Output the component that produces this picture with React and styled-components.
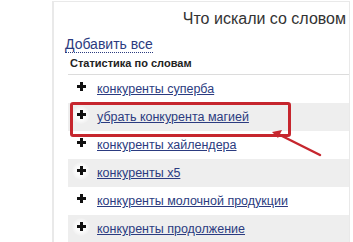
import React from "react";
import styled, { createGlobalStyle } from "styled-components";

const Global = createGlobalStyle`
  html, body { margin: 0; padding: 0; background: #fff; }
  body { font-family: "Liberation Sans", Arial, sans-serif; }
`;

const Page = styled.div`
  position: relative;
  width: 353px;
  height: 242px;
  overflow: hidden;
  padding: 1px 0 0 52px;
  box-sizing: border-box;
`;

const Panel = styled.div`
  width: 298px;
  height: 260px;
  border-left: 2px solid #e9e9e9;
  border-top: 1px solid #e9e9e9;
  border-right: 1px solid #e9e9e9;
  box-sizing: border-box;
  display: flex;
  flex-direction: column;
`;

const Title = styled.div`
  margin-top: 7px;
  padding-right: 3px;
  text-align: right;
  font-size: 16px;
  line-height: 19px;
  color: #333;
`;

const AddAll = styled.a`
  align-self: flex-start;
  margin: 9px 0 0 11px;
  font-size: 14px;
  line-height: 15px;
  color: #2b3b80;
  text-decoration: none;
  border-bottom: 1px dotted #2b3b80;
`;

const StatsHeader = styled.div`
  margin: 4px 0 0 16px;
  font-size: 11px;
  font-weight: bold;
  color: #222;
  line-height: 13px;
`;

const List = styled.div`
  margin: 4px 0 0 14px;
  border-top: 1px solid #dcdcdc;
  display: flex;
  flex-direction: column;
`;

const Row = styled.div`
  height: 28px;
  flex-shrink: 0;
  display: flex;
  align-items: center;
  padding-left: 4px;
  background: ${(p) => (p.$alt ? "#eeeeee" : "#ffffff")};
`;

const PlusWrap = styled.span`
  width: 18px;
  height: 18px;
  margin-top: -5px;
  display: flex;
  align-items: center;
  justify-content: center;
  border-radius: 50%;
  background: ${(p) => (p.$alt ? "radial-gradient(circle, #fbfbfb 40%, #eeeeee 75%)" : "transparent")};
`;

const WordLink = styled.a`
  margin-left: 7px;
  font-size: 12.5px;
  color: #2b3b80;
  text-decoration: underline;
  text-underline-offset: 1px;
`;

const Highlight = styled.div`
  position: absolute;
  left: 70px;
  top: 102px;
  width: 221px;
  height: 35px;
  border: 3px solid #c6262e;
  border-radius: 3px;
  box-sizing: border-box;
`;

const Arrow = styled.svg`
  position: absolute;
  left: 260px;
  top: 120px;
`;

const Plus = () => (
  <svg width="9" height="9" viewBox="0 0 9 9">
    <rect x="0" y="3" width="9" height="3" fill="#111" />
    <rect x="3" y="0" width="3" height="9" fill="#111" />
  </svg>
);

const words = [
  "конкуренты суперба",
  "убрать конкурента магией",
  "конкуренты хайлендера",
  "конкуренты х5",
  "конкуренты молочной продукции",
  "конкуренты продолжение",
];

export default function App() {
  return (
    <>
      <Global />
      <Page>
        <Panel>
          <Title>Что искали со словом</Title>
          <AddAll href="#">Добавить все</AddAll>
          <StatsHeader>Статистика по словам</StatsHeader>
          <List>
            {words.map((w, i) => (
              <Row key={w} $alt={i % 2 === 1}>
                <PlusWrap $alt={i % 2 === 1}>
                  <Plus />
                </PlusWrap>
                <WordLink href="#">{w}</WordLink>
              </Row>
            ))}
          </List>
        </Panel>
        <Highlight />
        <Arrow width="70" height="45" viewBox="0 0 70 45">
          <line x1="60" y1="35" x2="16" y2="13" stroke="#c6262e" strokeWidth="2.5" strokeLinecap="round" />
          <path d="M12 12 L22 10 L18 18 Z" fill="#c6262e" />
        </Arrow>
      </Page>
    </>
  );
}
